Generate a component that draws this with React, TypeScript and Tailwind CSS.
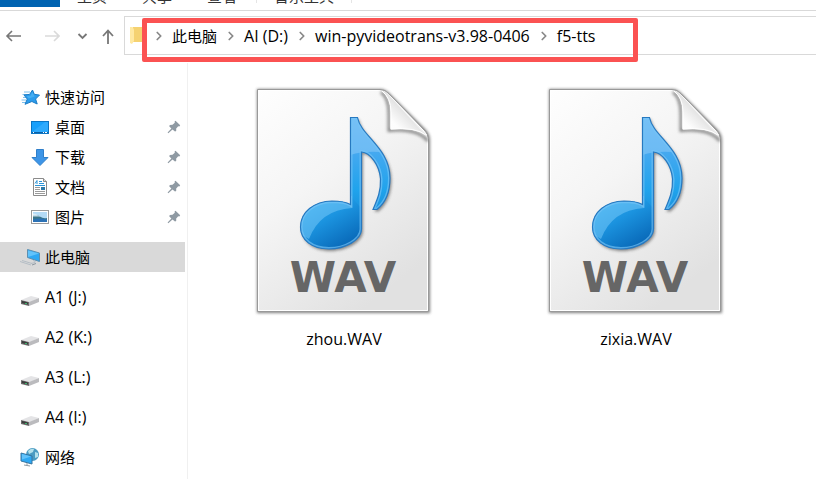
import type { ReactNode } from "react";
import { ChevronRight } from "lucide-react";

const tabs = ["主页", "共享", "查看"];
const crumbs = ["AI (D:)", "win-pyvideotrans-v3.98-0406", "f5-tts"];
const drives = ["A1 (J:)", "A2 (K:)", "A3 (L:)", "A4 (I:)"];
const files = ["zhou.WAV", "zixia.WAV"];

function StarIcon() {
  return (
    <svg width="20" height="20" viewBox="0 0 20 20" aria-hidden="true">
      <path d="M4 5h6M2.500 7.500h5M3 10.500h5M1.500 13h5M2 15.500h4" stroke="#7fc0ec" strokeWidth="1" />
      <path
        d="M12.500 3l1.800 4.300 5.200.8-3.900 3.900 1.600 5-5.300-2.500L5 17.300l2.300-5.200L4 8l5.600-.6z"
        fill="#2b9cec"
        stroke="#1c7cc6"
        strokeWidth="1"
        strokeLinejoin="round"
      />
      <path d="M12.300 5l-1.600 3.700-4 .2 2 2.600 6-2z" fill="#45aef2" />
    </svg>
  );
}

function DesktopIcon() {
  return (
    <svg width="20" height="20" viewBox="0 0 20 20" aria-hidden="true">
      <rect x="1.500" y="4.500" width="17" height="12" fill="#18a0fb" stroke="#0b75c4" />
      <path d="M2 15L15 5h3v10z" fill="#3db1ff" opacity=".6" />
      <path d="M2 15.500h16" stroke="#0a5fa5" />
      <path d="M3 15.500h1M13 15.500h1M15 15.500h2" stroke="#fff" />
    </svg>
  );
}

function DownloadIcon() {
  return (
    <svg width="20" height="20" viewBox="0 0 20 20" aria-hidden="true">
      <path
        d="M6.500 2.500h7v8h4.500L10 18.500 2 10.500h4.500z"
        fill="#3d95e7"
        stroke="#2f7fca"
        strokeLinejoin="round"
      />
    </svg>
  );
}

function DocumentIcon() {
  return (
    <svg width="20" height="20" viewBox="0 0 20 20" aria-hidden="true">
      <path d="M3.500 1.500h10l3 3v14h-13z" fill="#fff" stroke="#8b8b8b" />
      <path d="M13.500 1.500v3h3" fill="#ddd" stroke="#8b8b8b" />
      <path d="M5 6.500L7 3.500V7M9 4.500h3M9 6.500h5M5 8.500h10" stroke="#2b94d8" fill="none" />
      <path d="M5 10.500h5M5 12.500h5M5 14.500h10M5 16.500h10" stroke="#9a9a9a" />
      <rect x="11" y="10" width="4" height="3" fill="#2d79a8" />
    </svg>
  );
}

function PictureIcon() {
  return (
    <svg width="20" height="20" viewBox="0 0 20 20" aria-hidden="true">
      <rect x="1.500" y="3.500" width="17" height="13" fill="#fff" stroke="#9b9b9b" />
      <rect x="3" y="5" width="14" height="10" fill="#b4dbf6" />
      <path d="M3 8q4-1 7 1.500t7 1.500v2H3z" fill="#39758a" />
      <path d="M3 6.500q3 0 5 2l3 1H3z" fill="#e8f4fb" opacity=".8" />
      <path d="M3 12.500q7-2 14 0V15H3z" fill="#2c72b5" />
    </svg>
  );
}

function ComputerIcon() {
  return (
    <svg width="20" height="20" viewBox="0 0 20 20" aria-hidden="true">
      <path d="M7.500 2.500l12 3.500v8.500l-12-4z" fill="#2ea8f3" stroke="#5d8fb0" />
      <path d="M8 3.500l11 3-11 3.500z" fill="#62c3fb" />
      <path d="M13 13.500l2 .5v1.500l-4 1M0 14.500l11 3.500M2 13.500l10 3" stroke="#b4bdc5" fill="none" />
      <path d="M12 18l4-1.500" stroke="#8c97a0" />
    </svg>
  );
}

function DriveIcon() {
  return (
    <svg width="20" height="20" viewBox="0 0 20 20" aria-hidden="true">
      <path d="M1 13L11 9l8 2-9 4z" fill="#e4e4e6" />
      <path d="M9 15l10-4v4l-10 4z" fill="#bbbbbe" />
      <path d="M1 13l8 2v4l-8-2z" fill="#6a6a6a" />
      <path d="M2 14l6 1.500v2L2 16z" fill="#3c3c3c" />
      <path d="M5 16.500h2" stroke="#3bb36b" />
    </svg>
  );
}

function NetworkIcon() {
  return (
    <svg width="20" height="20" viewBox="0 0 20 20" aria-hidden="true">
      <circle cx="12.500" cy="7.500" r="6.500" fill="#4a9bc2" />
      <path d="M8 4q3-3 6-2l-1 3-4 2zM15 5l3 1v4l-3 1z" fill="#b4e1ec" />
      <path d="M1 6l11 3v8L1 14z" fill="#2ea8f3" stroke="#3775a0" />
      <path d="M2 7l9 2.500-9 3z" fill="#62c3fb" />
      <path d="M7 16v2M4 18l6 1" stroke="#8e9aa3" />
    </svg>
  );
}

function PinIcon() {
  return (
    <svg width="14" height="14" viewBox="0 0 14 14" fill="#8f9aa3" aria-hidden="true">
      <path d="M8.500.8L13.200 5.300 12.300 6.400 11.200 6.200 9.200 8.500 9.200 11 8 11.600 5.500 9.400 1.300 13.200.6 12.600 4.400 8.400 2.200 6.200 2.800 5 5.500 4.800 7.800 2.700 7.600 1.600z" />
    </svg>
  );
}

function FolderIcon() {
  return (
    <svg width="18" height="20" viewBox="0 0 18 20" aria-hidden="true">
      <path d="M4 1h14v15H4z" fill="#f5d271" />
      <path d="M1 1h2.500L5 3.500V15l-2 3-2-1z" fill="#ffe9a2" />
    </svg>
  );
}

function WavIcon() {
  const note =
    "M98.500 33.500H105.500C109 52 138 64 138 94C138 110 132 120 125 125.500H121C125 116 129 108 128.500 95C127.500 81 118 68.500 109.500 68V145C109.500 156 93 165 77 165C60 165 48.500 156 48.500 143C48.500 128 62 117.500 80 117C88 117 94 118 98.500 120.500Z";

  return (
    <svg width="184" height="236" viewBox="0 0 184 236" role="img" aria-label="WAV">
      <defs>
        <linearGradient id="paper" x1="0" y1="0" x2=".6" y2="1">
          <stop offset="0" stopColor="#fefefe" />
          <stop offset=".45" stopColor="#f5f5f5" />
          <stop offset="1" stopColor="#e1e1e1" />
        </linearGradient>
        <linearGradient id="fold" x1="0" y1="1" x2=".6" y2=".4">
          <stop offset="0" stopColor="#fff" />
          <stop offset=".5" stopColor="#fdfdfd" />
          <stop offset="1" stopColor="#dcdcdc" />
        </linearGradient>
        <linearGradient id="stem" x1="0" y1="0" x2="0" y2="1">
          <stop offset="0" stopColor="#5ab4f3" />
          <stop offset=".25" stopColor="#47a9f0" />
          <stop offset=".55" stopColor="#20a3ec" />
          <stop offset=".8" stopColor="#1888d4" />
          <stop offset="1" stopColor="#0864b4" />
        </linearGradient>
        <linearGradient id="head" x1=".1" y1="0" x2=".75" y2="1">
          <stop offset="0" stopColor="#35b0f3" />
          <stop offset=".45" stopColor="#1b93df" />
          <stop offset="1" stopColor="#0560b0" />
        </linearGradient>
        <filter id="soft" x="-10%" y="-10%" width="120%" height="120%">
          <feGaussianBlur stdDeviation="1.500" />
        </filter>
        <clipPath id="noteClip">
          <path d={note} />
        </clipPath>
        <clipPath id="pageClip">
          <path d="M5.500 5.500H128Q133 5.500 137 10L172 46Q176.500 50 176.500 56V227.500H5.500Z" />
        </clipPath>
      </defs>

      <path
        d="M5 5H128Q133 5 137 9L173 45Q178 50 178 56V229H5Z"
        fill="#555"
        opacity=".75"
        filter="url(#soft)"
      />
      <path
        d="M5.500 5.500H128Q133 5.500 137 10L172 46Q176.500 50 176.500 56V227.500H5.500Z"
        fill="url(#paper)"
        stroke="#999"
      />
      <path
        d="M6.500 6.500H128Q133 6.500 137 11L171 46Q175.500 50 175.500 56V226.500H6.500Z"
        fill="none"
        stroke="#fff"
      />

      {/* page curl */}
      <g clipPath="url(#pageClip)">
        <path
          d="M129 8Q137 14 137 30V46.500Q165 44 176 57"
          fill="none"
          stroke="#444"
          strokeWidth="3"
          opacity=".6"
          filter="url(#soft)"
        />
      </g>
      <path d="M128 6Q138.500 12 138.500 28V45.500Q166 43 176 54L136 10Q132 6 128 6Z" fill="url(#fold)" />
      <path d="M130 7Q139 14 139 28V45Q164 43 174 51" fill="none" stroke="#fff" />
      <path d="M128 5.500Q133 5.500 137 9.500L173 46Q176 49 176.500 54" fill="none" stroke="#999" strokeWidth=".7" />

      {/* note */}
      <path d={note} fill="#333" opacity=".55" transform="translate(1.500 2)" filter="url(#soft)" />
      <path d={note} fill="url(#stem)" />
      <g clipPath="url(#noteClip)">
        <path d="M45 170V112H98.500L110 125V170Z" fill="url(#head)" />
        <path d="M98.500 30H145V70Q116 65 98.500 71Z" fill="#8ccbf7" opacity=".55" />
        <path d="M48 150V112H100V124Q68 126 57 155Z" fill="#7cccfa" opacity=".5" />
        <path d={note} fill="none" stroke="#77c5f8" strokeWidth="4" opacity=".65" />
      </g>
      <path d={note} fill="none" stroke="#2779c0" strokeWidth="1.200" />

      <text
        x="91"
        y="208"
        textAnchor="middle"
        fill="#666"
        className="font-['DejaVu_Sans'] text-[42px] font-bold"
      >
        WAV
      </text>
    </svg>
  );
}

type NavItemProps = {
  icon: ReactNode;
  label: string;
  nested?: boolean;
  selected?: boolean;
};

function NavItem({ icon, label, nested, selected }: NavItemProps) {
  return (
    <a
      href="#"
      className={`flex h-[30px] items-center gap-[5px] pr-1 ${nested ? "pl-[30px]" : "pl-5"} ${
        selected ? "bg-[#d9d9d9]" : "hover:bg-[#e5f3ff]"
      }`}
    >
      {icon}
      <span>{label}</span>
      {nested && (
        <span className="ml-auto">
          <PinIcon />
        </span>
      )}
    </a>
  );
}

function Crumb({ children }: { children: ReactNode }) {
  return (
    <li className="flex items-center">
      <ChevronRight size={14} strokeWidth={3} className="mr-1 ml-[5px] text-[#888]" />
      <a href="#" className="px-0.5 whitespace-nowrap">
        {children}
      </a>
    </li>
  );
}

export default function App() {
  return (
    <div className="flex min-h-screen flex-col overflow-hidden bg-white font-['Open_Sans','Noto_Sans_CJK_SC',sans-serif] text-[15px] text-black">
      {/* Ribbon tabs */}
      <nav className="flex h-[11px] items-start overflow-hidden border-b border-[#d9d9d9] text-[#333]">
        <div className="h-[7px] w-[60px] bg-[#0063b1]" />
        <div className="flex h-1.5 items-end gap-[35px] px-[17px]">
          {tabs.map((tab) => (
            <button key={tab} type="button" className="leading-5">
              {tab}
            </button>
          ))}
        </div>
        <div className="ml-0.5 h-[3px] w-px bg-[#e5e5e5]" />
        <div className="flex h-1.5 items-end px-[17px]">
          <button type="button" className="leading-5">
            音乐工具
          </button>
        </div>
        <div className="h-[3px] w-px bg-[#e5e5e5]" />
      </nav>

      {/* Address bar */}
      <div className="flex pt-[5px]">
        <div className="flex w-[124px] shrink-0 items-center gap-4 pl-1 text-[#777]">
          <button type="button" aria-label="后退">
            <svg width="20" height="20" viewBox="0 0 20 20" fill="none" stroke="#777" strokeWidth="1.600">
              <path d="M17 10H3M8 5l-5 5 5 5" />
            </svg>
          </button>
          <button type="button" aria-label="前进">
            <svg width="20" height="20" viewBox="0 0 20 20" fill="none" stroke="#dadada" strokeWidth="1.600">
              <path d="M5 10h14M14 5l5 5-5 5" />
            </svg>
          </button>
          <button type="button" aria-label="最近浏览的位置">
            <svg width="12" height="20" viewBox="0 0 12 20" fill="none" stroke="#777" strokeWidth="1.800">
              <path d="M2.500 8l4 4 4-4" />
            </svg>
          </button>
          <button type="button" aria-label="上移" className="-ml-1">
            <svg width="16" height="20" viewBox="0 0 16 20" fill="none" stroke="#777" strokeWidth="1.800">
              <path d="M8 18V4.500M3 10l5-5.500 5 5.500" />
            </svg>
          </button>
        </div>

        <div className="relative flex h-[39px] flex-1 items-center border border-r-0 border-[#d9d9d9] pl-1">
          <FolderIcon />
          <ol className="flex items-center text-base">
            <Crumb>
              <span className="text-[15px]">此电脑</span>
            </Crumb>
            {crumbs.map((crumb) => (
              <Crumb key={crumb}>{crumb}</Crumb>
            ))}
          </ol>
          <div className="pointer-events-none absolute top-px left-[17px] h-11 w-[496px] rounded-xs border-[5px] border-[#fb5252]" />
        </div>
      </div>

      <div className="flex flex-1 pt-2">
        <aside className="flex w-[188px] shrink-0 flex-col gap-2.5 border-r border-[#f0f0f0] pt-[19px] pr-0.5">
          <div>
            <NavItem icon={<StarIcon />} label="快速访问" />
            <NavItem icon={<DesktopIcon />} label="桌面" nested />
            <NavItem icon={<DownloadIcon />} label="下载" nested />
            <NavItem icon={<DocumentIcon />} label="文档" nested />
            <NavItem icon={<PictureIcon />} label="图片" nested />
          </div>
          <NavItem icon={<ComputerIcon />} label="此电脑" selected />
          <div className="flex flex-col gap-2.5 text-base">
            {drives.map((drive) => (
              <NavItem key={drive} icon={<DriveIcon />} label={drive} />
            ))}
          </div>
          <NavItem icon={<NetworkIcon />} label="网络" />
        </aside>

        <main className="flex flex-1 flex-wrap content-start pt-[21px] pl-2.5">
          {files.map((file) => (
            <figure key={file} className="flex w-[292px] flex-col items-center">
              <WavIcon />
              <figcaption className="pt-[7px] text-base">{file}</figcaption>
            </figure>
          ))}
        </main>
      </div>
    </div>
  );
}
